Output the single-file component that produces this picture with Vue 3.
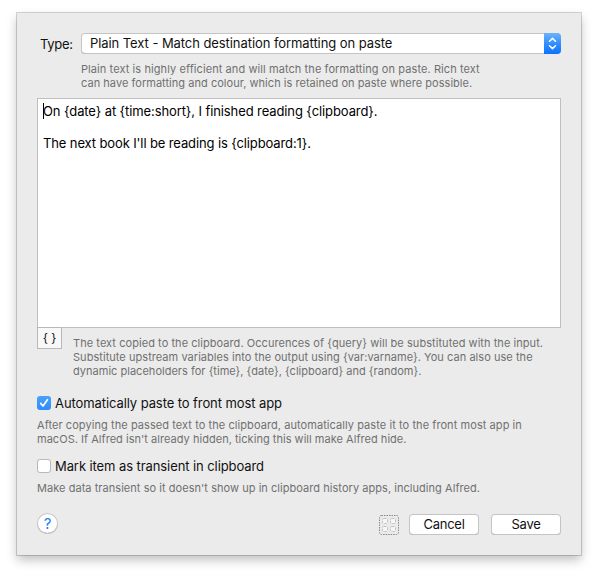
<script setup>
import { ref } from 'vue'

const autoPaste = ref(true)
const transient = ref(false)
</script>

<template>
  <main class="stage">
    <section class="dialog">
      <div class="type-row">
        <span class="type-label">Type:</span>
        <button class="select">
          <span class="select-text">Plain Text - Match destination formatting on paste</span>
          <span class="stepper">
            <svg width="17" height="21" viewBox="0 0 17 21" fill="none" stroke="#fff" stroke-width="1.5" stroke-linecap="round" stroke-linejoin="round">
              <path d="M5.5 8.3 8.5 5.4l3 2.9M5.5 12.7l3 2.9 3-2.9" />
            </svg>
          </span>
        </button>
      </div>
      <div class="hint type-hint">
        <div class="t1">Plain text is highly efficient and will match the formatting on paste. Rich text</div>
        <div class="t2">can have formatting and colour, which is retained on paste where possible.</div>
      </div>

      <div class="editor">
        <div class="e1"><i class="caret"></i>On {date} at {time:short}, I finished reading {clipboard}.</div>
        <div class="blank"></div>
        <div class="e2">The next book I'll be reading is {clipboard:1}.</div>
      </div>
      <div class="below">
        <button class="braces">{ }</button>
        <div class="hint desc">
          <div class="d1">The text copied to the clipboard. Occurences of {query} will be substituted with the input.</div>
          <div class="d2">Substitute upstream variables into the output using {var:varname}. You can also use the</div>
          <div class="d3">dynamic placeholders for {time}, {date}, {clipboard} and {random}.</div>
        </div>
      </div>

      <div class="option" @click="autoPaste = !autoPaste">
        <span class="check" :class="{ on: autoPaste }">
          <svg v-if="autoPaste" width="14" height="14" viewBox="0 0 14 14" fill="none" stroke="#fff" stroke-width="1.7" stroke-linecap="round" stroke-linejoin="round">
            <path d="M3.7 7.4 6 10l4.4-6.3" />
          </svg>
        </span>
        <span class="o1">Automatically paste to front most app</span>
      </div>
      <div class="hint option-hint">
        <div class="h1">After copying the passed text to the clipboard, automatically paste it to the front most app in</div>
        <div class="h2">macOS. If Alfred isn't already hidden, ticking this will make Alfred hide.</div>
      </div>

      <div class="option second" @click="transient = !transient">
        <span class="check" :class="{ on: transient }">
          <svg v-if="transient" width="14" height="14" viewBox="0 0 14 14" fill="none" stroke="#fff" stroke-width="1.7">
            <path d="M3.7 7.4 6 10l4.4-6.3" />
          </svg>
        </span>
        <span class="o2">Mark item as transient in clipboard</span>
      </div>
      <div class="hint option-hint">
        <div class="h3">Make data transient so it doesn't show up in clipboard history apps, including Alfred.</div>
      </div>

      <footer class="footer">
        <button class="help">?</button>
        <span class="spacer"></span>
        <button class="grid">
          <svg width="20" height="20" viewBox="0 0 20 20" fill="none">
            <rect x=".5" y=".5" width="19" height="19" rx="2" stroke="#888" stroke-dasharray="1.5 1" />
            <g fill="#f6f6f6" stroke="#c2c2c2" stroke-dasharray="3 1">
              <rect x="3.5" y="3.5" width="5" height="5" rx="1" />
              <rect x="11.5" y="3.5" width="5" height="5" rx="1" />
              <rect x="3.5" y="11.5" width="5" height="5" rx="1" />
              <rect x="11.5" y="11.5" width="5" height="5" rx="1" />
            </g>
          </svg>
        </button>
        <button class="push cancel">Cancel</button>
        <button class="push save">Save</button>
      </footer>
    </section>
  </main>
</template>

<style>
body {
  background: #fff;
}
</style>

<style scoped>
.stage {
  box-sizing: border-box;
  width: 598px;
  height: 576px;
  padding: 13px 17px 21px;
  overflow: hidden;
  font: 13px/16px Inter, "Liberation Sans", sans-serif;
  color: #111;
  white-space: nowrap;
}
.dialog {
  box-sizing: border-box;
  width: 564px;
  height: 542px;
  padding: 20px 20px 0;
  background: #ebebeb;
  box-shadow: 0 0 0 1px rgba(0, 0, 0, 0.17), 0 5px 10px rgba(0, 0, 0, 0.25);
}
button {
  margin: 0;
  padding: 0;
  border: 0;
  font: inherit;
  color: inherit;
}
.type-row {
  display: flex;
  height: 21px;
}
.type-label {
  box-sizing: border-box;
  width: 44px;
  padding: 3px 0 0 3px;
  letter-spacing: -0.3px;
}
.select {
  display: flex;
  width: 480px;
  height: 21px;
  overflow: hidden;
  background: #fff;
  border-radius: 4px;
  box-shadow: inset 0 0 0 1px #c4c4c4, inset 0 -1px 0 #aaa;
  text-align: left;
}
.select-text {
  flex: 1;
  padding: 2px 0 0 9px;
  letter-spacing: -0.07px;
}
.stepper {
  width: 17px;
  height: 21px;
  background: linear-gradient(#6bb3fa, #2e8cfc 55%, #0b73ff);
}
.stepper svg,
.check svg,
.grid svg {
  display: block;
}
.hint {
  font-size: 11px;
  line-height: 14px;
  color: #707070;
}
.t1 { letter-spacing: 0.083px; }
.t2 { letter-spacing: 0.035px; }
.d1 { letter-spacing: 0.055px; }
.d2 { letter-spacing: 0.045px; }
.d3 { letter-spacing: 0.02px; }
.h1 { letter-spacing: 0.07px; }
.h2 { letter-spacing: 0.03px; }
.h3 { letter-spacing: 0.045px; }
.e1 { letter-spacing: -0.1px; }
.e2 { letter-spacing: -0.12px; }
.o1,
.o2 { letter-spacing: -0.085px; }
.type-hint {
  padding: 8px 0 0 44px;
}
.editor {
  box-sizing: border-box;
  height: 230px;
  margin-top: 8px;
  padding: 4px 5px;
  border: 1px solid #bfbfbf;
  background: #fff;
  color: #000;
}
.blank {
  height: 16px;
}
.caret {
  display: inline-block;
  width: 1px;
  height: 16px;
  margin-right: -1px;
  vertical-align: -3px;
  background: #000;
}
.editor > div {
  height: 16px;
}
.below {
  display: flex;
  height: 68px;
  margin-top: -1px;
}
.braces {
  box-sizing: border-box;
  width: 25px;
  height: 22px;
  border: 1px solid #b8b8b8;
  background: #f8f8f8;
  font-size: 12px;
}
.desc {
  padding: 9px 0 0 11px;
}
.option {
  display: flex;
  gap: 4px;
  height: 16px;
}
.check {
  box-sizing: border-box;
  width: 14px;
  height: 14px;
  margin-top: 1px;
  border-radius: 3px;
  background: #fff;
  box-shadow: inset 0 0 0 1px #b9b9b9;
}
.check.on {
  background: linear-gradient(#4ba0f8, #2f8bfb);
  box-shadow: none;
}
.option-hint {
  padding-top: 7px;
}
.second {
  margin-top: 12px;
}
.footer {
  display: flex;
  align-items: flex-start;
  margin-top: 18px;
}
.help {
  width: 21px;
  height: 21px;
  border-radius: 50%;
  background: #fff;
  box-shadow: inset 0 0 0 1px #c5c5c5, inset 0 -1px 0 #aaa;
  color: #1580fb;
  font-size: 15px;
  line-height: 21px;
}
.spacer {
  flex: 1;
}
.grid {
  width: 20px;
  height: 20px;
  margin: 2px 10px 0 0;
  background: none;
}
.push {
  width: 70px;
  height: 21px;
  margin-top: 1px;
  padding-bottom: 1px;
  border-radius: 4px;
  background: #fff;
  box-shadow: inset 0 0 0 1px #c4c4c4, inset 0 -1px 0 #aaa;
  letter-spacing: -0.25px;
}
.save {
  margin-left: 12px;
}
</style>
